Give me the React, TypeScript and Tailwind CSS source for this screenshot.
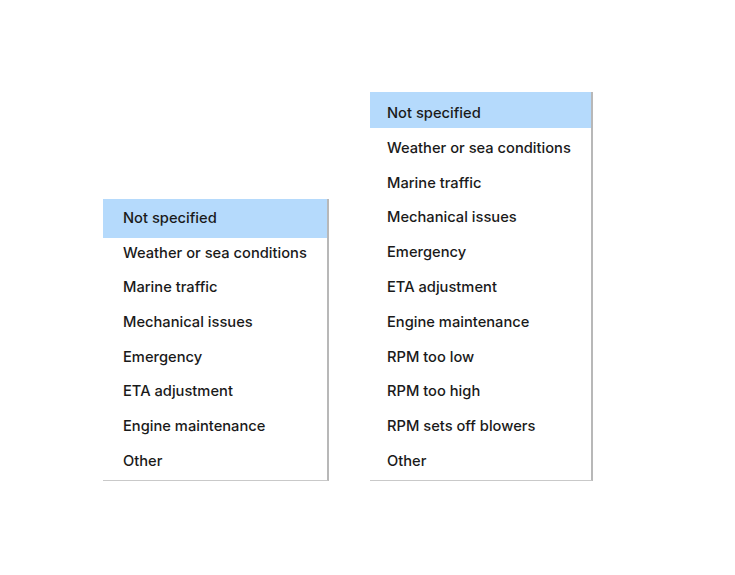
const shortList = [
  "Not specified",
  "Weather or sea conditions",
  "Marine traffic",
  "Mechanical issues",
  "Emergency",
  "ETA adjustment",
  "Engine maintenance",
  "Other",
];

const longList = [
  "Not specified",
  "Weather or sea conditions",
  "Marine traffic",
  "Mechanical issues",
  "Emergency",
  "ETA adjustment",
  "Engine maintenance",
  "RPM too low",
  "RPM too high",
  "RPM sets off blowers",
  "Other",
];

type MenuProps = {
  items: string[];
  className: string;
  itemClass: string;
  rowClass: string;
  firstClass: string;
};

function ReasonMenu({ items, className, itemClass, rowClass, firstClass }: MenuProps) {
  return (
    <ul className={`bg-white border-r-2 border-b border-r-[#b8b8b8] border-b-[#c9c9c9] ${className}`}>
      {items.map((label, i) => (
        <li
          key={label}
          className={`flex items-start text-[14.7px] font-medium text-[#1a1a1a] ${itemClass} ${
            i === 0 ? `relative bg-[#b5dafc] ${firstClass}` : rowClass
          }`}
        >
          {label}
        </li>
      ))}
    </ul>
  );
}

export default function App() {
  return (
    <div className="h-[575px] w-[735px] bg-white" style={{ fontFamily: "Inter, 'Liberation Sans', sans-serif" }}>
      <div className="flex items-start gap-[41px] pl-[103px] pt-[92px]">
        <ReasonMenu
          items={shortList}
          className="mt-[107px] w-[226px] pb-[3px]"
          itemClass="pl-[20px] pt-[8px]"
          rowClass="h-[34.7px]"
          firstClass="h-[39px] mb-[-4.3px]"
        />
        <ReasonMenu
          items={longList}
          className="w-[223px] pb-[5px]"
          itemClass="pl-[17px] pt-[10px]"
          rowClass="h-[34.8px]"
          firstClass="h-[36px] mb-[-1.2px]"
        />
      </div>
    </div>
  );
}
